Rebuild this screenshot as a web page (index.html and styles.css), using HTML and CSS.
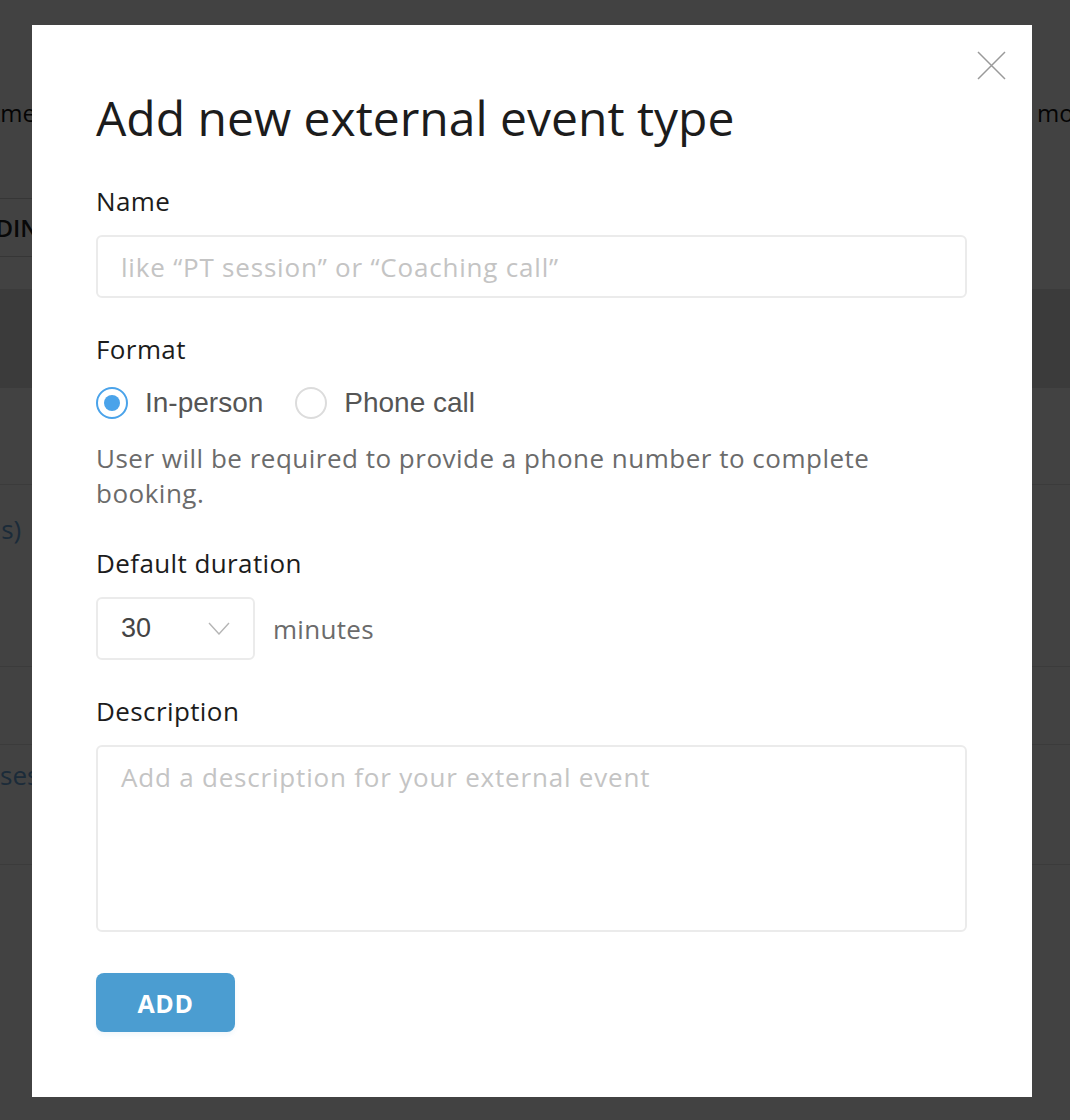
FILE: index.html
```html
<!DOCTYPE html>
<html>
<head>
  <meta charset="UTF-8" />
  <title>Add new external event type</title>
  <link rel="stylesheet" href="styles.css">
</head>
<body>
  <div class="page">
    <div class="page-head">
      <span class="head-left">Appointments</span>
      <span class="head-right">more</span>
    </div>
    <div class="toolbar">
      <span class="tool-btn">ADDING</span>
    </div>
    <div class="table-head"></div>
    <div class="row row-a"></div>
    <div class="row row-b"><span class="link link-b">(2 sessions)</span></div>
    <div class="row row-c"></div>
    <div class="row row-d"><span class="link link-d">sessions</span></div>
  </div>

  <div class="overlay">
    <div class="modal">
      <button class="close-btn" type="button" aria-label="Close">
        <svg width="29" height="29" viewBox="0 0 29 29">
          <path d="M1 1L28 28M28 1L1 28" stroke="#9a9a9a" stroke-width="1.5" fill="none" />
        </svg>
      </button>

      <h1>Add new external event type</h1>

      <form class="event-form">
        <label class="field-label" for="name">Name</label>
        <input class="text-input" id="name" type="text" placeholder="like “PT session” or “Coaching call”" />

        <div class="field-label">Format</div>
        <div class="radio-row">
          <label class="radio">
            <span class="radio-dot checked"></span>
            In-person
          </label>
          <label class="radio">
            <span class="radio-dot"></span>
            Phone call
          </label>
        </div>
        <p class="help">User will be required to provide a phone number to complete booking.</p>

        <div class="field-label">Default duration</div>
        <div class="duration-row">
          <div class="select">
            <span>30</span>
            <svg width="22" height="13" viewBox="0 0 22 13">
              <path d="M1 1L11 12L21 1" stroke="#b5b5b5" stroke-width="1.4" fill="none" />
            </svg>
          </div>
          <span class="unit">minutes</span>
        </div>

        <label class="field-label" for="desc">Description</label>
        <textarea class="text-area" id="desc" placeholder="Add a description for your external event"></textarea>

        <button class="add-btn" type="button">ADD</button>
      </form>
    </div>
  </div>
</body>
</html>
```

FILE: styles.css
```css
html, body {
  margin: 0;
  padding: 0;
  height: 100%;
}
body {
  font-family: "Open Sans", "Noto Sans", Arial, sans-serif;
  background: #fff;
  overflow: hidden;
}

/* page behind the dialog */
.page {
  margin-left: -88px;
  width: 1300px;
}
.page-head {
  display: flex;
  height: 198px;
  box-sizing: border-box;
  padding-top: 97px;
  font-size: 24px;
  line-height: 32px;
  color: #111;
}
.head-left {
  width: 1125px;
}
.toolbar {
  height: 59px;
}
.tool-btn {
  display: block;
  width: 260px;
  height: 59px;
  line-height: 57px;
  border-top: 1px solid #d0d0d0;
  border-bottom: 1px solid #d0d0d0;
  box-sizing: border-box;
  padding-left: 50px;
  font-size: 24px;
  font-weight: 600;
  color: #222;
}
.table-head {
  margin-top: 32px;
  height: 99px;
  background: #e2e2e2;
}
.row {
  border-bottom: 1px solid #e2e2e2;
  box-sizing: border-box;
}
.row-a { height: 97px; }
.row-b { height: 182px; padding-top: 26px; }
.row-c { height: 78px; }
.row-d { height: 120px; padding-top: 12px; }
.link {
  display: inline-block;
  color: #6aa6dc;
  font-size: 26px;
}
.link-b { margin-left: -30px; }
.link-d { margin-left: 88px; }

.overlay {
  position: fixed;
  inset: 0;
  background: rgba(0, 0, 0, 0.74);
}

/* dialog */
.modal {
  position: relative;
  width: 1000px;
  height: 1072px;
  margin: 25px 0 0 32px;
  background: #fff;
  box-sizing: border-box;
  padding: 64px 64px 0 64px;
}
.close-btn {
  position: absolute;
  top: 26px;
  right: 26px;
  border: none;
  background: none;
  padding: 0;
  cursor: pointer;
}
.close-btn svg {
  display: block;
}
h1 {
  margin: 0 0 37px 0;
  font-size: 48px;
  font-weight: 400;
  line-height: 58px;
  color: #1c1c1c;
}
.event-form {
  display: flex;
  flex-direction: column;
  align-items: flex-start;
}
.field-label {
  font-size: 26px;
  line-height: 34px;
  letter-spacing: 0.4px;
  color: #1c1c1c;
  margin-bottom: 17px;
}
.text-input,
.text-area {
  width: 871px;
  box-sizing: border-box;
  border: 2px solid #ebebeb;
  border-radius: 6px;
  font-family: inherit;
  font-size: 26px;
  line-height: 34px;
  letter-spacing: 0.8px;
  color: #333;
  padding: 0 23px;
  outline: none;
}
.text-input {
  height: 63px;
  margin-bottom: 34px;
}
.text-area {
  height: 187px;
  padding-top: 13px;
  resize: none;
  margin-bottom: 41px;
}
.text-input::placeholder,
.text-area::placeholder {
  color: #c4c4c4;
}

.radio-row {
  display: flex;
  gap: 32px;
  margin-top: 3px;
}
.radio {
  display: flex;
  align-items: center;
  gap: 17px;
  font-family: "Liberation Sans", Arial, sans-serif;
  font-size: 28px;
  line-height: 34px;
  color: #555;
}
.radio-dot {
  width: 32px;
  height: 32px;
  box-sizing: border-box;
  border-radius: 50%;
  border: 2px solid #dcdcdc;
  display: flex;
  align-items: center;
  justify-content: center;
}
.radio-dot.checked {
  border-color: #4aa3ea;
}
.radio-dot.checked::after {
  content: "";
  width: 16px;
  height: 16px;
  border-radius: 50%;
  background: #4aa3ea;
}
.help {
  margin: 21px 0 35px 0;
  font-size: 26px;
  line-height: 35px;
  letter-spacing: 0.5px;
  color: #6b6b6b;
  max-width: 871px;
}

.duration-row {
  display: flex;
  align-items: center;
  gap: 18px;
  margin-bottom: 34px;
}
.select {
  width: 159px;
  height: 63px;
  box-sizing: border-box;
  border: 2px solid #ebebeb;
  border-radius: 6px;
  display: flex;
  align-items: center;
  justify-content: space-between;
  padding: 0 23px 0 23px;
  font-family: "Liberation Sans", Arial, sans-serif;
  font-size: 27px;
  color: #444;
}
.unit {
  font-size: 26px;
  letter-spacing: 0.3px;
  color: #6b6b6b;
}

.add-btn {
  width: 139px;
  height: 59px;
  border: none;
  border-radius: 8px;
  background: #4b9dd1;
  color: #fff;
  font-family: inherit;
  font-size: 25px;
  font-weight: 700;
  letter-spacing: 0.6px;
  cursor: pointer;
  box-shadow: 0 3px 4px rgba(75, 157, 209, 0.08);
}
```
